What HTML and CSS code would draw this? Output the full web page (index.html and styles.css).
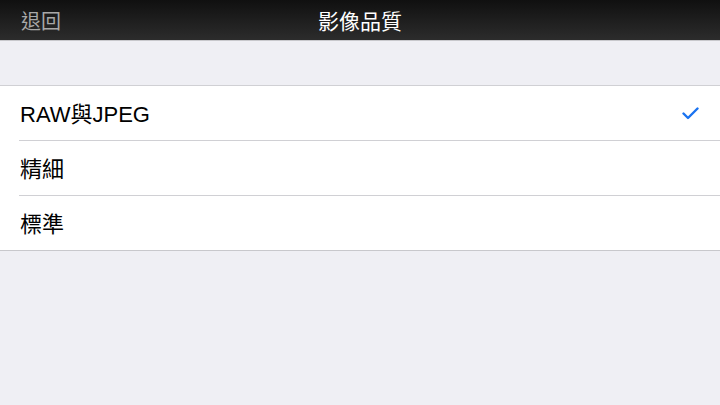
FILE: index.html
```html
<!DOCTYPE html>
<html lang="zh-Hant">
<head>
    <meta charset="UTF-8">
    <meta name="viewport" content="width=device-width, initial-scale=1.0">
    <title>影像品質</title>
    <link rel="stylesheet" href="styles.css">
</head>
<body>

    <div class="navbar">
        <span class="back">退回</span>
        <h1 class="title">影像品質</h1>
    </div>

    <div class="list">
        <div class="row">
            <span class="label">RAW與JPEG</span>
            <svg class="check" width="17" height="13" viewBox="0 0 17 13">
                <path d="M1.5 6.5 L6 11 L15.5 1.5" fill="none" stroke="#1a73f0" stroke-width="2.4" stroke-linecap="round" stroke-linejoin="round"/>
            </svg>
        </div>
        <div class="row">
            <span class="label">精細</span>
        </div>
        <div class="row">
            <span class="label">標準</span>
        </div>
    </div>

</body>
</html>
```

FILE: styles.css
```css
body {
    font-family: "Liberation Sans", "Noto Sans CJK TC", sans-serif;
    margin: 0;
    padding: 0;
    width: 720px;
    height: 405px;
    overflow: hidden;
    background-color: #efeff4;
}
.navbar {
    height: 40px;
    position: relative;
    display: flex;
    align-items: center;
    justify-content: center;
    background: linear-gradient(#101010, #2c2c2c);
    border-bottom: 1px solid #c8c8cc;
}
.back {
    position: absolute;
    left: 21px;
    top: 6px;
    font-size: 20px;
    color: #a8a8a8;
}
.title {
    margin: 0;
    font-size: 21px;
    font-weight: normal;
    color: #fff;
}
.list {
    margin-top: 44px;
    background-color: #fff;
    border-top: 1px solid #d0d0d4;
    border-bottom: 1px solid #c8c8cc;
}
.row {
    height: 55px;
    margin-left: 19px;
    padding-right: 21px;
    padding-bottom: 3px;
    display: flex;
    align-items: center;
    justify-content: space-between;
    border-bottom: 1px solid #d0d0d4;
    box-sizing: border-box;
}
.row:last-child {
    border-bottom: none;
    height: 54px;
}
.label {
    font-size: 22px;
    color: #000;
    margin-left: 1px;
}
.check {
    margin-top: 3px;
}
```
